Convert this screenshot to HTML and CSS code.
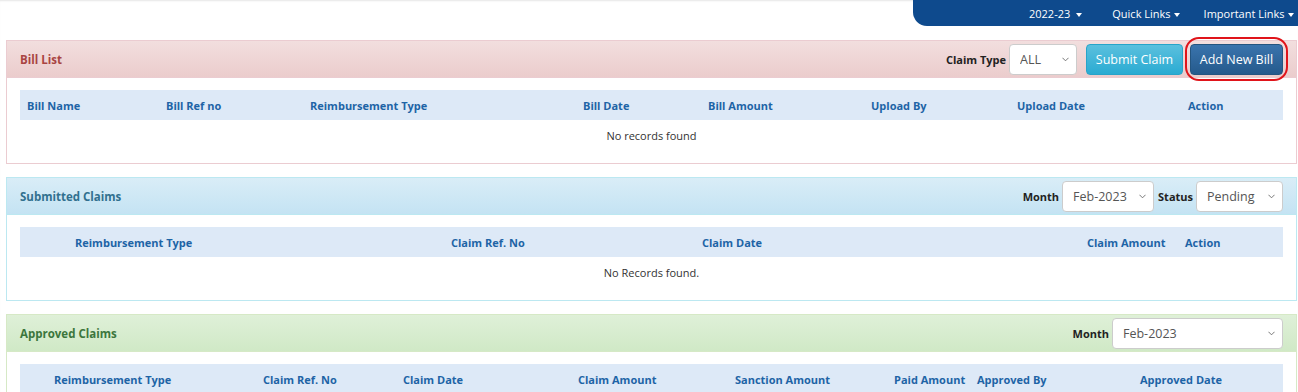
FILE: index.html
```html
<!DOCTYPE html>
<html lang="en">
<head>
    <meta charset="UTF-8">
    <meta name="viewport" content="width=device-width, initial-scale=1.0">
    <title>Reimbursement</title>
    <link rel="stylesheet" href="styles.css">
</head>
<body>
    <div class="topbar">
        <ul class="topnav">
            <li class="year">2022-23<span class="caret"></span></li>
            <li class="quick">Quick Links<span class="caret"></span></li>
            <li>Important Links<span class="caret"></span></li>
        </ul>
    </div>

    <div class="page">
        <div class="panel danger">
            <div class="panel-heading">
                <span class="panel-title">Bill List</span>
                <div class="tools">
                    <label>Claim Type</label>
                    <span class="sel-wrap sel-type">
                        <select class="sel"><option>ALL</option></select>
                        <svg class="chev" viewBox="0 0 8 5"><path d="M0.5 0.5 L4 4 L7.5 0.5" /></svg>
                    </span>
                    <button class="btn btn-info">Submit Claim</button>
                    <span class="marked"><button class="btn btn-primary">Add New Bill</button></span>
                </div>
            </div>
            <div class="panel-body">
                <div class="thead bill-cols">
                    <div>Bill Name</div>
                    <div>Bill Ref no</div>
                    <div>Reimbursement Type</div>
                    <div>Bill Date</div>
                    <div>Bill Amount</div>
                    <div>Upload By</div>
                    <div>Upload Date</div>
                    <div>Action</div>
                </div>
                <div class="empty">No records found</div>
            </div>
        </div>

        <div class="panel info">
            <div class="panel-heading">
                <span class="panel-title">Submitted Claims</span>
                <div class="tools">
                    <label>Month</label>
                    <span class="sel-wrap sel-month">
                        <select class="sel"><option>Feb-2023</option></select>
                        <svg class="chev" viewBox="0 0 8 5"><path d="M0.5 0.5 L4 4 L7.5 0.5" /></svg>
                    </span>
                    <label>Status</label>
                    <span class="sel-wrap sel-status">
                        <select class="sel"><option>Pending</option></select>
                        <svg class="chev" viewBox="0 0 8 5"><path d="M0.5 0.5 L4 4 L7.5 0.5" /></svg>
                    </span>
                </div>
            </div>
            <div class="panel-body">
                <div class="thead submitted-cols">
                    <div>Reimbursement Type</div>
                    <div>Claim Ref. No</div>
                    <div>Claim Date</div>
                    <div>Claim Amount</div>
                    <div>Action</div>
                </div>
                <div class="empty">No Records found.</div>
            </div>
        </div>

        <div class="panel success">
            <div class="panel-heading">
                <span class="panel-title">Approved Claims</span>
                <div class="tools">
                    <label>Month</label>
                    <span class="sel-wrap sel-wide">
                        <select class="sel"><option>Feb-2023</option></select>
                        <svg class="chev" viewBox="0 0 8 5"><path d="M0.5 0.5 L4 4 L7.5 0.5" /></svg>
                    </span>
                </div>
            </div>
            <div class="panel-body short">
                <div class="thead approved-cols">
                    <div>Reimbursement Type</div>
                    <div>Claim Ref. No</div>
                    <div>Claim Date</div>
                    <div>Claim Amount</div>
                    <div>Sanction Amount</div>
                    <div>Paid Amount</div>
                    <div>Approved By</div>
                    <div>Approved Date</div>
                </div>
            </div>
        </div>
    </div>
</body>
</html>
```

FILE: styles.css
```css
* {
    margin: 0;
    padding: 0;
    box-sizing: border-box;
}

body {
    font-family: "Open Sans", "Liberation Sans", sans-serif;
    font-size: 11px;
    color: #333;
    background: #fff;
    box-shadow: inset 0 2px 2px -1px #e6e6e6;
    overflow: hidden;
}

.topbar {
    display: flex;
    justify-content: flex-end;
    height: 26px;
}

.topnav {
    list-style: none;
    display: flex;
    align-items: center;
    width: 385px;
    height: 26px;
    padding-left: 116px;
    background: #0e4a8d;
    border-bottom-left-radius: 14px;
    color: #fff;
    font-size: 11px;
}

.topnav li {
    white-space: nowrap;
}

.topnav .year {
    margin-right: 30px;
}

.topnav .year .caret {
    margin-left: 6px;
}

.topnav .quick {
    margin-right: 24px;
}

.caret {
    display: inline-block;
    margin-left: 3px;
    vertical-align: middle;
    border-top: 4px solid #fff;
    border-left: 3.5px solid transparent;
    border-right: 3.5px solid transparent;
}

.page {
    padding: 14px 1px 0 6px;
}

.panel {
    border: 1px solid #ddd;
    margin-bottom: 13px;
    background: #fff;
}

.panel-heading {
    display: flex;
    align-items: center;
    justify-content: space-between;
    height: 37px;
    padding: 0 13px;
    border-bottom: 1px solid transparent;
}

.panel-title {
    font-size: 11.5px;
    font-weight: bold;
}

.tools {
    display: flex;
    align-items: center;
    font-weight: bold;
    color: #222;
}

.tools label {
    margin-right: 3px;
}

.sel-wrap {
    position: relative;
    display: flex;
    height: 31px;
    margin-right: 4px;
}

.sel {
    appearance: none;
    width: 100%;
    height: 31px;
    padding: 0 18px 0 10px;
    border: 1px solid #ccc;
    border-radius: 4px;
    background: #fff;
    color: #555;
    font-family: inherit;
    font-size: 12.5px;
}

.chev {
    position: absolute;
    right: 8px;
    top: 13px;
    width: 7px;
    height: 5px;
    fill: none;
    stroke: #666;
    stroke-width: 1;
    pointer-events: none;
}

.sel-type { width: 68px; margin-right: 9px; }
.sel-month { width: 92px; }
.sel-status { width: 87px; margin-right: 0; }
.sel-wide { width: 171px; margin-right: 0; }

.btn {
    height: 31px;
    padding: 0;
    border-radius: 4px;
    color: #fff;
    font-family: inherit;
    font-size: 12.5px;
    white-space: nowrap;
    border: 1px solid transparent;
}

.btn-info {
    width: 97px;
    background: linear-gradient(#5bc0de, #2aabd2);
    border-color: #28a4c9;
    margin-right: 7px;
}

.btn-primary {
    width: 93px;
    background: linear-gradient(#3a74ad, #255a8c);
    border-color: #245580;
}

.marked {
    position: relative;
    display: flex;
}

.marked::after {
    content: "";
    position: absolute;
    left: -5px;
    top: -7px;
    right: -5px;
    bottom: -6px;
    border: 2px solid #e0141a;
    border-radius: 14px;
}

.panel-body {
    padding: 12px 13px 0 13px;
    height: 85px;
}

.panel-body.short {
    height: 60px;
}

.thead {
    display: grid;
    align-items: center;
    height: 30px;
    background: #dde9f7;
    color: #1d64a6;
    font-weight: bold;
}

.thead div {
    padding-left: 7px;
    white-space: nowrap;
}

.bill-cols {
    grid-template-columns: 139px 144px 273px 125px 163px 146px 171px 1fr;
}

.submitted-cols {
    grid-template-columns: 424px 251px 385px 98px 1fr;
}

.submitted-cols div:first-child {
    padding-left: 55px;
}

.approved-cols {
    grid-template-columns: 236px 140px 175px 157px 159px 83px 163px 1fr;
}

.approved-cols div:first-child {
    padding-left: 34px;
}

.empty {
    text-align: center;
    padding-top: 8px;
}

.danger { border-color: #ebccd1; }
.danger .panel-heading {
    background: linear-gradient(#f2dede, #ebcccc);
    border-color: #ebccd1;
    color: #a94442;
}

.info { border-color: #bce8f1; }
.info .panel-heading {
    background: linear-gradient(#d9edf7, #c4e3f3);
    border-color: #bce8f1;
    color: #31708f;
}

.success { border-color: #d6e9c6; }
.success .panel-heading {
    background: linear-gradient(#dff0d8, #d0e9c6);
    border-color: #d6e9c6;
    color: #3c763d;
}
```
